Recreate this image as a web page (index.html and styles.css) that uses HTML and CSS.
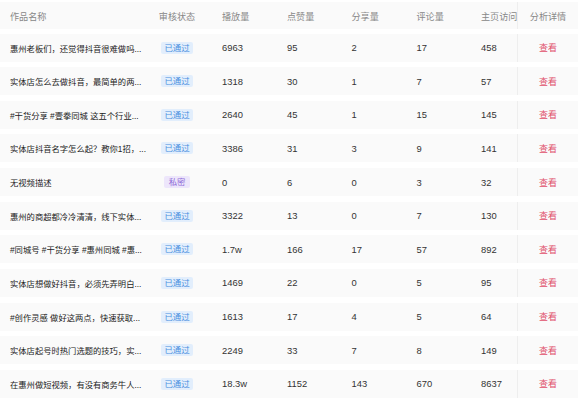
FILE: index.html
```html
<!DOCTYPE html>
<html lang="zh-CN">
<head>
    <meta charset="UTF-8">
    <meta name="viewport" content="width=device-width, initial-scale=1.0">
    <title>作品列表</title>
    <link rel="stylesheet" href="styles.css">
</head>
<body>
    <div class="works-table">
        <div class="row head">
            <div class="cell">作品名称</div>
            <div class="cell center">审核状态</div>
            <div class="cell">播放量</div>
            <div class="cell">点赞量</div>
            <div class="cell">分享量</div>
            <div class="cell">评论量</div>
            <div class="cell">主页访问</div>
            <div class="cell fixed">分析详情</div>
        </div>
        <div class="row">
            <div class="cell title">惠州老板们，还觉得抖音很难做吗...</div>
            <div class="cell center"><span class="tag">已通过</span></div>
            <div class="cell">6963</div><div class="cell">95</div><div class="cell">2</div><div class="cell">17</div><div class="cell">458</div>
            <div class="cell fixed"><a class="link">查看</a></div>
        </div>
        <div class="row">
            <div class="cell title">实体店怎么去做抖音，最简单的两...</div>
            <div class="cell center"><span class="tag">已通过</span></div>
            <div class="cell">1318</div><div class="cell">30</div><div class="cell">1</div><div class="cell">7</div><div class="cell">57</div>
            <div class="cell fixed"><a class="link">查看</a></div>
        </div>
        <div class="row">
            <div class="cell title">#干货分享 #壹拳同城 这五个行业...</div>
            <div class="cell center"><span class="tag">已通过</span></div>
            <div class="cell">2640</div><div class="cell">45</div><div class="cell">1</div><div class="cell">15</div><div class="cell">145</div>
            <div class="cell fixed"><a class="link">查看</a></div>
        </div>
        <div class="row">
            <div class="cell title">实体店抖音名字怎么起？教你1招，...</div>
            <div class="cell center"><span class="tag">已通过</span></div>
            <div class="cell">3386</div><div class="cell">31</div><div class="cell">3</div><div class="cell">9</div><div class="cell">141</div>
            <div class="cell fixed"><a class="link">查看</a></div>
        </div>
        <div class="row">
            <div class="cell title">无视频描述</div>
            <div class="cell center"><span class="tag private">私密</span></div>
            <div class="cell">0</div><div class="cell">6</div><div class="cell">0</div><div class="cell">3</div><div class="cell">32</div>
            <div class="cell fixed"><a class="link">查看</a></div>
        </div>
        <div class="row">
            <div class="cell title">惠州的商超都冷冷清清，线下实体...</div>
            <div class="cell center"><span class="tag">已通过</span></div>
            <div class="cell">3322</div><div class="cell">13</div><div class="cell">0</div><div class="cell">7</div><div class="cell">130</div>
            <div class="cell fixed"><a class="link">查看</a></div>
        </div>
        <div class="row">
            <div class="cell title">#同城号 #干货分享 #惠州同城 #惠...</div>
            <div class="cell center"><span class="tag">已通过</span></div>
            <div class="cell">1.7w</div><div class="cell">166</div><div class="cell">17</div><div class="cell">57</div><div class="cell">892</div>
            <div class="cell fixed"><a class="link">查看</a></div>
        </div>
        <div class="row">
            <div class="cell title">实体店想做好抖音，必须先弄明白...</div>
            <div class="cell center"><span class="tag">已通过</span></div>
            <div class="cell">1469</div><div class="cell">22</div><div class="cell">0</div><div class="cell">5</div><div class="cell">95</div>
            <div class="cell fixed"><a class="link">查看</a></div>
        </div>
        <div class="row">
            <div class="cell title">#创作灵感 做好这两点，快速获取...</div>
            <div class="cell center"><span class="tag">已通过</span></div>
            <div class="cell">1613</div><div class="cell">17</div><div class="cell">4</div><div class="cell">5</div><div class="cell">64</div>
            <div class="cell fixed"><a class="link">查看</a></div>
        </div>
        <div class="row">
            <div class="cell title">实体店起号时热门选题的技巧，实...</div>
            <div class="cell center"><span class="tag">已通过</span></div>
            <div class="cell">2249</div><div class="cell">33</div><div class="cell">7</div><div class="cell">8</div><div class="cell">149</div>
            <div class="cell fixed"><a class="link">查看</a></div>
        </div>
        <div class="row">
            <div class="cell title">在惠州做短视频，有没有商务牛人...</div>
            <div class="cell center"><span class="tag">已通过</span></div>
            <div class="cell">18.3w</div><div class="cell">1152</div><div class="cell">143</div><div class="cell">670</div><div class="cell">8637</div>
            <div class="cell fixed"><a class="link">查看</a></div>
        </div>
    </div>
</body>
</html>
```

FILE: styles.css
```css
body {
    margin: 0;
    background-color: #fff;
    font-family: 'Liberation Sans', 'Noto Sans CJK SC', sans-serif;
    font-size: 9.4px;
    color: #333;
}
.works-table {
    width: 578px;
    padding-top: 2px;
    display: flex;
    flex-direction: column;
    gap: 5.65px;
}
.row {
    display: grid;
    grid-template-columns: 142px 70px 65px 64.5px 65px 64.5px 46px 61px;
    height: 28px;
    background-color: #fafafa;
}
.row.head {
    height: 27px;
    margin-bottom: -1.15px;
    font-size: 9.1px;
    color: #888;
}
.cell {
    display: flex;
    align-items: center;
    padding-left: 10px;
    white-space: nowrap;
}
.cell.title {
    font-size: 8.3px;
    color: #222;
}
.cell.center {
    justify-content: center;
    padding-left: 0;
}
.cell.fixed {
    justify-content: center;
    padding-left: 0;
    border-left: 1px solid #eeeeee;
}
.tag {
    display: inline-block;
    height: 12px;
    line-height: 12px;
    padding: 0 3px;
    font-size: 8.4px;
    border-radius: 2px;
    background-color: #e2eefc;
    color: #4a8ee0;
}
.tag.private {
    padding: 0 4.5px;
    background-color: #ede6fb;
    color: #8f6cd8;
}
.link {
    color: #e0506a;
    font-size: 9px;
    cursor: pointer;
}
```
